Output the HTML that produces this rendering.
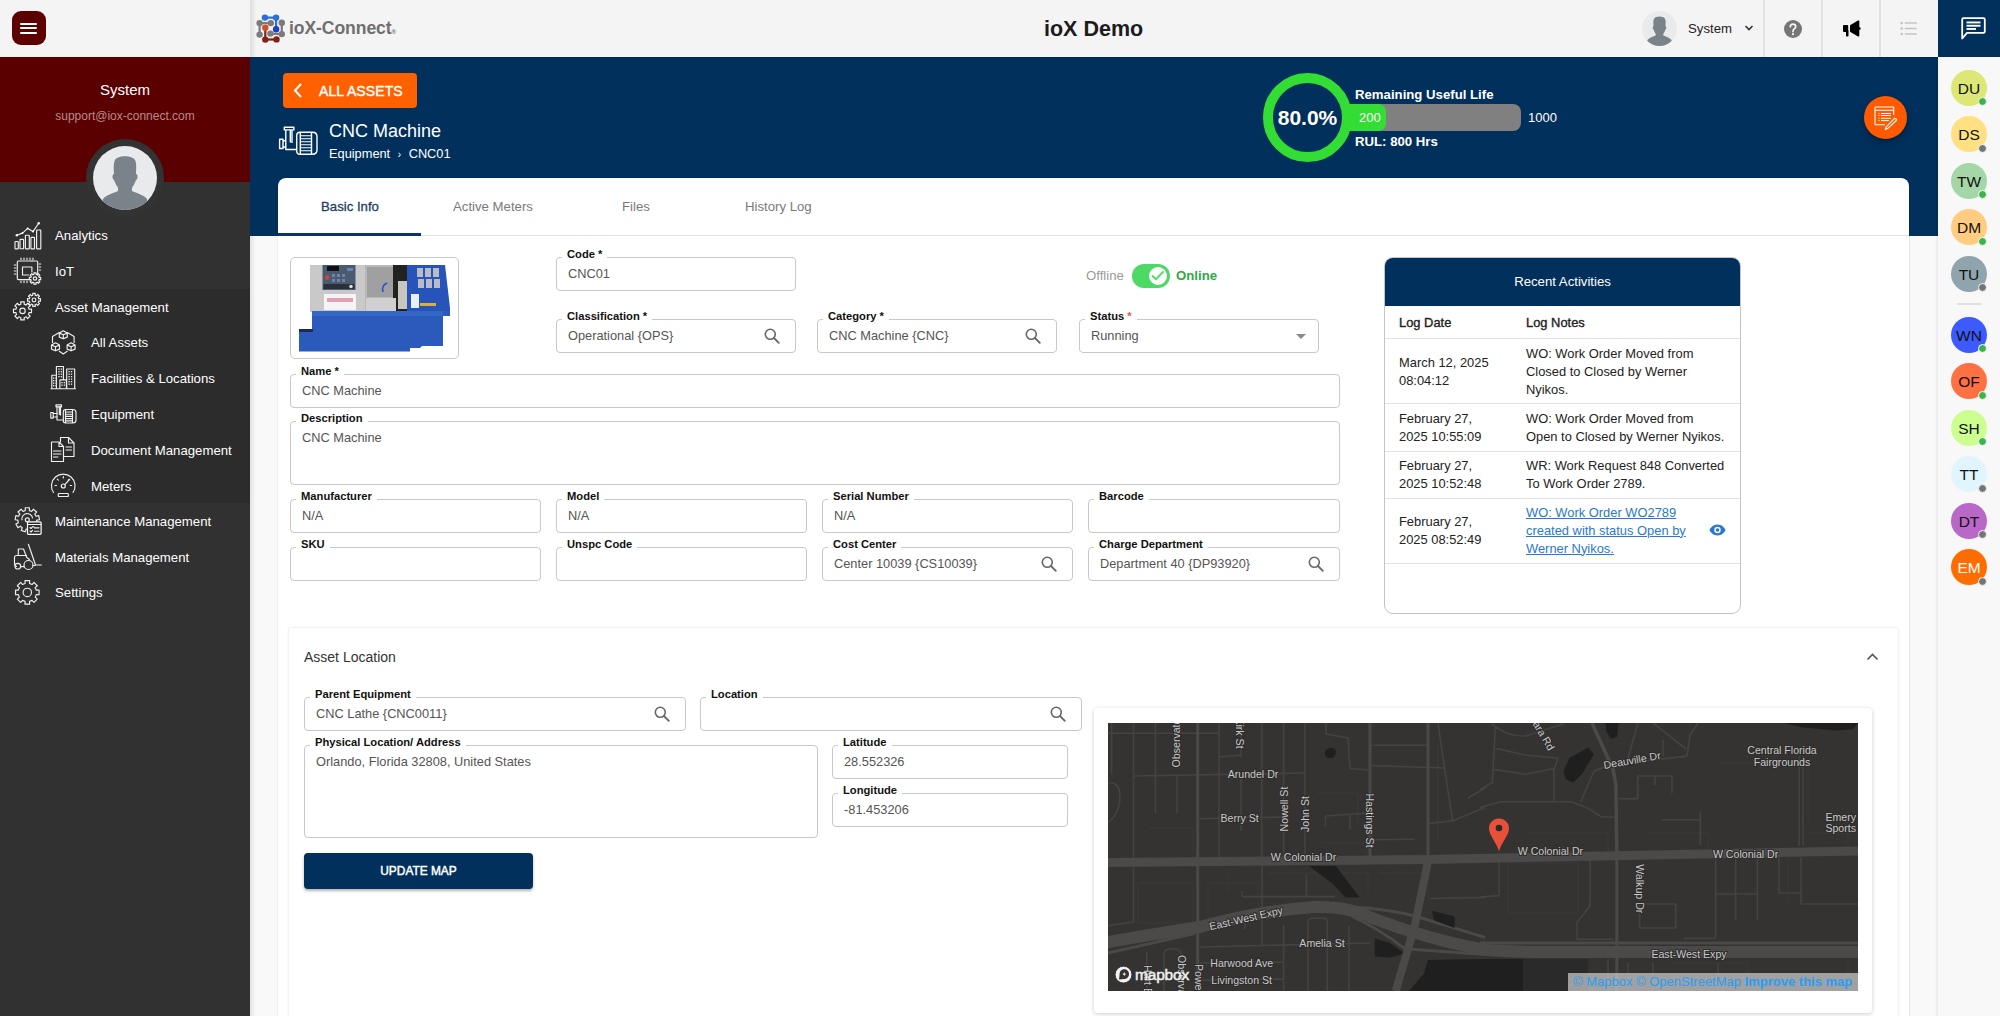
<!DOCTYPE html>
<html><head><meta charset="utf-8">
<style>
*{box-sizing:border-box;margin:0;padding:0}
html,body{width:2000px;height:1016px;overflow:hidden;background:#f7f7f7;font-family:"Liberation Sans",sans-serif;color:#222}
.a{position:absolute}
#topbar{left:0;top:0;width:2000px;height:57px;background:#f4f4f4}
#sbtop{left:0;top:0;width:250px;height:57px;background:#f4f4f4}
#hamb{left:12px;top:11px;width:34px;height:34px;background:#5c0000;border-radius:9px}
#hamb i{position:absolute;left:8px;width:17px;height:2.2px;background:#fff;border-radius:1px}
#side{left:0;top:57px;width:250px;height:959px;background:#313131}
#sidered{left:0;top:57px;width:250px;height:125px;background:#5a0000}
#sideact{left:0;top:289px;width:250px;height:214px;background:#2c2c2c}
.mi{position:absolute;color:#fff;font-size:13.2px;line-height:16px;white-space:nowrap}
.ic{position:absolute}
.ic svg{display:block}
#banner{left:250px;top:57px;width:1688px;height:179px;background:#01305c}
#card{left:278px;top:178px;width:1631px;height:900px;background:#fff;border-radius:8px 8px 0 0;box-shadow:0 0 2px rgba(0,0,0,0.12)}
.tab{position:absolute;top:199px;font-size:13.2px;color:#7a7a7a;white-space:nowrap;line-height:16px}
.fld{position:absolute;border:1px solid #c8c8c8;border-radius:4px;background:#fff}
.fld .l{position:absolute;top:-10px;left:5px;padding:0 5px;background:#fff;font-weight:bold;font-size:11.2px;line-height:13px;color:#111;white-space:nowrap}
.fld .v{position:absolute;left:11px;top:8px;font-size:12.8px;line-height:15px;color:#555;white-space:nowrap}
.srch{position:absolute;top:8px;right:15px;width:16px;height:16px}
#rp{left:1938px;top:57px;width:62px;height:959px;background:#f8f8f8}
#rptop{left:1938px;top:0;width:62px;height:57px;background:#01305c}
.act{position:absolute;font-size:12.9px;line-height:17.8px;color:#222;white-space:nowrap}
.av{position:absolute;left:1951px;width:36px;height:36px;border-radius:50%;font-size:15.5px;line-height:37px;text-align:center;color:#111}
.av i{position:absolute;left:26.5px;top:27.5px;width:9px;height:9px;border-radius:50%;border:1px solid #f8f8f8}
</style></head><body>
<div id="topbar" class="a"></div>
<div id="sbtop" class="a"></div>
<div id="hamb" class="a"><i style="top:11.8px"></i><i style="top:16.3px"></i><i style="top:20.8px"></i></div>
<div class="a" style="left:250px;top:0;width:6px;height:57px;background:linear-gradient(90deg,#ddd,#f4f4f4)"></div>

<!-- Sidebar -->
<div id="side" class="a"></div>
<div id="sidered" class="a"></div>
<div id="sideact" class="a"></div>
<div class="a" style="left:0;top:81px;width:250px;text-align:center;color:#fff;font-size:15px;line-height:18px">System</div>
<div class="a" style="left:0;top:109px;width:250px;text-align:center;color:#b78b8b;font-size:12px;line-height:14px">support@iox-connect.com</div>
<div class="a" style="left:86px;top:139px;width:78px;height:78px;border-radius:50%;background:#333"></div>
<div class="a" style="left:93px;top:146px;width:64px;height:64px;border-radius:50%;background:#e9eaec;overflow:hidden">
<svg width="64" height="64" viewBox="0 0 64 64"><path d="M22 14c3-5 17-5 20 0 2 4 1 10 1 14 2 0 2 5 0 6-1 3-3 6-4 8v3c4 2 12 4 15 8l2 11H8l2-11c3-4 11-6 15-8v-3c-1-2-3-5-4-8-2-1-2-6 0-6 0-4-1-10 1-14z" fill="#7a828a"/></svg></div>

<div class="mi" style="left:55px;top:228px">Analytics</div>
<div class="mi" style="left:55px;top:264px">IoT</div>
<div class="mi" style="left:55px;top:300px">Asset Management</div>
<div class="mi" style="left:91px;top:335px">All Assets</div>
<div class="mi" style="left:91px;top:371px">Facilities &amp; Locations</div>
<div class="mi" style="left:91px;top:407px">Equipment</div>
<div class="mi" style="left:91px;top:443px">Document Management</div>
<div class="mi" style="left:91px;top:479px">Meters</div>
<div class="mi" style="left:55px;top:514px">Maintenance Management</div>
<div class="mi" style="left:55px;top:550px">Materials Management</div>
<div class="mi" style="left:55px;top:585px">Settings</div>
<!--ICONS--><svg class="a" style="left:0;top:200px" width="250" height="420" viewBox="0 200 250 420"><g stroke="#f0f0f0" stroke-width="1.15" fill="none" stroke-linejoin="round" stroke-linecap="round">
<rect x="15" y="241.5" width="3.3000000000000007" height="7.300000000000011" rx="0.6"/>
<rect x="20" y="239.4" width="3.6000000000000014" height="9.400000000000006" rx="0.6"/>
<rect x="25.4" y="235.2" width="3.900000000000002" height="13.600000000000023" rx="0.6"/>
<rect x="30.9" y="237.3" width="3.6000000000000014" height="11.5" rx="0.6"/>
<rect x="36.6" y="230" width="4.199999999999996" height="18.80000000000001" rx="0.6"/>
<path d="M16.8 235.2 L22.5 233.1 L27.7 228.4 L33 231.6 L38.7 223.2"/>
</g><g fill="#fff"><circle cx="16.8" cy="235.2" r="1.2"/><circle cx="22.5" cy="233.1" r="1"/><circle cx="27.7" cy="228.4" r="1"/><circle cx="33" cy="231.6" r="1"/><circle cx="38.7" cy="223.2" r="1.2"/></g>
<g stroke="#f0f0f0" stroke-width="1.15" fill="none" stroke-linejoin="round" stroke-linecap="round">
<path d="M32 261 H18.5 Q17.3 261 17.3 262.2 V278.4 Q17.3 279.6 18.5 279.6 H30.5"/>
<path d="M37.7 275 V262.2 Q37.7 261 36.5 261 H32"/>
<path d="M31.9 272 V267 H22.5 V275 H28.5"/>
<path d="M21 258 V259.6"/><path d="M21 281 V282.6"/>
<path d="M24 258 V259.6"/><path d="M24 281 V282.6"/>
<path d="M27 258 V259.6"/><path d="M27 281 V282.6"/>
<path d="M30 258 V259.6"/>
<path d="M33 258 V259.6"/>
<path d="M14.3 265 H15.8"/>
<path d="M14.3 268 H15.8"/>
<path d="M14.3 271 H15.8"/>
<path d="M14.3 274 H15.8"/>
<path d="M39.2 264 H40.7"/>
<path d="M39.2 267 H40.7"/>
<path d="M39.2 270 H40.7"/>
<path d="M33.35 274.53 L33.96 274.33 L33.87 272.81 L36.13 272.81 L36.04 274.33 L36.65 274.53 L37.22 274.82 L38.22 273.68 L39.82 275.28 L38.68 276.28 L38.97 276.85 L39.17 277.46 L40.69 277.37 L40.69 279.63 L39.17 279.54 L38.97 280.15 L38.68 280.72 L39.82 281.72 L38.22 283.32 L37.22 282.18 L36.65 282.47 L36.04 282.67 L36.13 284.19 L33.87 284.19 L33.96 282.67 L33.35 282.47 L32.78 282.18 L31.78 283.32 L30.18 281.72 L31.32 280.72 L31.03 280.15 L30.83 279.54 L29.31 279.63 L29.31 277.37 L30.83 277.46 L31.03 276.85 L31.32 276.28 L30.18 275.28 L31.78 273.68 L32.78 274.82 Z"/><circle cx="35" cy="278.5" r="1.7"/>
</g>
<g stroke="#f0f0f0" stroke-width="1.15" fill="none" stroke-linejoin="round" stroke-linecap="round"><path d="M19.90 304.62 L20.86 304.30 L20.71 301.88 L24.29 301.88 L24.14 304.30 L25.10 304.62 L26.01 305.07 L27.61 303.25 L30.15 305.79 L28.33 307.39 L28.78 308.30 L29.10 309.26 L31.52 309.11 L31.52 312.69 L29.10 312.54 L28.78 313.50 L28.33 314.41 L30.15 316.01 L27.61 318.55 L26.01 316.73 L25.10 317.18 L24.14 317.50 L24.29 319.92 L20.71 319.92 L20.86 317.50 L19.90 317.18 L18.99 316.73 L17.39 318.55 L14.85 316.01 L16.67 314.41 L16.22 313.50 L15.90 312.54 L13.48 312.69 L13.48 309.11 L15.90 309.26 L16.22 308.30 L16.67 307.39 L14.85 305.79 L17.39 303.25 L18.99 305.07 Z"/><circle cx="22.5" cy="310.9" r="2.7"/>
<path d="M32.16 295.47 L32.84 295.24 L32.71 293.43 L35.29 293.43 L35.16 295.24 L35.84 295.47 L36.48 295.79 L37.67 294.41 L39.49 296.23 L38.11 297.42 L38.43 298.06 L38.66 298.74 L40.47 298.61 L40.47 301.19 L38.66 301.06 L38.43 301.74 L38.11 302.38 L39.49 303.57 L37.67 305.39 L36.48 304.01 L35.84 304.33 L35.16 304.56 L35.29 306.37 L32.71 306.37 L32.84 304.56 L32.16 304.33 L31.52 304.01 L30.33 305.39 L28.51 303.57 L29.89 302.38 L29.57 301.74 L29.34 301.06 L27.53 301.19 L27.53 298.61 L29.34 298.74 L29.57 298.06 L29.89 297.42 L28.51 296.23 L30.33 294.41 L31.52 295.79 Z"/><circle cx="34" cy="299.9" r="1.9"/></g>
<g stroke="#f0f0f0" stroke-width="1.15" fill="none" stroke-linejoin="round" stroke-linecap="round"><path d="M63.3 330.8 L67.3 333.12 V337.12 L63.3 338.8 L59.3 337.12 V333.12 Z M59.3 333.12 L63.3 334.8 L67.3 333.12 M63.3 334.8 V338.8"/><path d="M55.5 342.8 L59.5 345.12 V349.12 L55.5 350.8 L51.5 349.12 V345.12 Z M51.5 345.12 L55.5 346.8 L59.5 345.12 M55.5 346.8 V350.8"/><path d="M71.1 342.8 L75.1 345.12 V349.12 L71.1 350.8 L67.1 349.12 V345.12 Z M67.1 345.12 L71.1 346.8 L75.1 345.12 M71.1 346.8 V350.8"/>
<path d="M59.2 332.5 L52.5 336.5 V342.5 M67.4 332.5 L74.1 336.5 V342.5 M59.3 351.3 L63.3 354 L67.2 351.3"/></g>
<g stroke="#f0f0f0" stroke-width="1.15" fill="none" stroke-linejoin="round" stroke-linecap="round" stroke-width="1.1"><path d="M51 388.7 H75.5 M51.8 388.7 V375.2 H56.4 M56.4 388.7 V366.5 H63.4 V379.8 M59.9 388.7 V379.8 H66.4 V388.7 M66.7 388.7 V369 H74.7 V388.7"/>
</g><g fill="#eee">
<rect x="53.0" y="377.5" width="1.3" height="1.3"/>
<rect x="53.0" y="380.0" width="1.3" height="1.3"/>
<rect x="53.0" y="382.5" width="1.3" height="1.3"/>
<rect x="53.0" y="385.0" width="1.3" height="1.3"/>
<rect x="55.4" y="377.5" width="1.3" height="1.3"/>
<rect x="55.4" y="380.0" width="1.3" height="1.3"/>
<rect x="55.4" y="382.5" width="1.3" height="1.3"/>
<rect x="55.4" y="385.0" width="1.3" height="1.3"/>
<rect x="58.3" y="368.5" width="1.3" height="1.3"/>
<rect x="58.3" y="371.0" width="1.3" height="1.3"/>
<rect x="58.3" y="373.5" width="1.3" height="1.3"/>
<rect x="58.3" y="376.0" width="1.3" height="1.3"/>
<rect x="60.7" y="368.5" width="1.3" height="1.3"/>
<rect x="60.7" y="371.0" width="1.3" height="1.3"/>
<rect x="60.7" y="373.5" width="1.3" height="1.3"/>
<rect x="60.7" y="376.0" width="1.3" height="1.3"/>
<rect x="61.3" y="382.0" width="1.3" height="1.3"/>
<rect x="61.3" y="384.5" width="1.3" height="1.3"/>
<rect x="63.7" y="382.0" width="1.3" height="1.3"/>
<rect x="63.7" y="384.5" width="1.3" height="1.3"/>
<rect x="68.5" y="371.0" width="1.3" height="1.3"/>
<rect x="68.5" y="373.5" width="1.3" height="1.3"/>
<rect x="68.5" y="376.0" width="1.3" height="1.3"/>
<rect x="68.5" y="378.5" width="1.3" height="1.3"/>
<rect x="68.5" y="381.0" width="1.3" height="1.3"/>
<rect x="68.5" y="383.5" width="1.3" height="1.3"/>
<rect x="70.9" y="371.0" width="1.3" height="1.3"/>
<rect x="70.9" y="373.5" width="1.3" height="1.3"/>
<rect x="70.9" y="376.0" width="1.3" height="1.3"/>
<rect x="70.9" y="378.5" width="1.3" height="1.3"/>
<rect x="70.9" y="381.0" width="1.3" height="1.3"/>
<rect x="70.9" y="383.5" width="1.3" height="1.3"/>
</g>
<g stroke="#f0f0f0" stroke-width="1.15" fill="none" stroke-linejoin="round" stroke-linecap="round" stroke-width="1.1"><rect x="56" y="404.8" width="5.5" height="2"/><path d="M57 406.8 V420 H63.5 M60.5 406.8 V415 M59.3 406.8 V414.5"/><rect x="50.8" y="412.5" width="2.4" height="5.6"/><path d="M53.2 413.5 H57 M53.2 417 H57"/><path d="M65.5 409.5 H73 Q76 409.5 76 412.5 V420 Q76 423 73 423 H65.5 Q63.3 423 63.3 420.8 V411.7 Q63.3 409.5 65.5 409.5 Z M65.5 409.5 V423 M72.5 409.5 V423 M65.5 412 H72.5 M65.5 414.2 H72.5 M65.5 416.4 H72.5 M65.5 418.6 H72.5 M65.5 420.8 H72.5"/></g>
<g stroke="#f0f0f0" stroke-width="1.15" fill="none" stroke-linejoin="round" stroke-linecap="round" stroke-width="1.2"><path d="M51.5 442 H59 L63.5 446.5 V461.5 H51.5 Z M59 442 V446.5 H63.5"/><path d="M60.5 437.5 H68.5 L74 443 V456.5 H64.5 M60.5 437.5 V442 M68.5 437.5 V443 H74"/><path d="M53.5 451 H61 M53.5 454 H61 M53.5 457 H58 M66 447 H71.5 M66 450 H71.5"/></g>
<g stroke="#f0f0f0" stroke-width="1.15" fill="none" stroke-linejoin="round" stroke-linecap="round" stroke-width="1.2"><path d="M53.5 492.5 A11.8 11.8 0 1 1 73 492.5"/><rect x="58.3" y="493.5" width="10" height="3" rx="0.6"/><circle cx="63.3" cy="486" r="2"/><path d="M64.8 484.6 L69.5 479.5 M63.3 476.5 V478 M55 485.5 H56.5 M70.2 485.5 H71.6 M57.3 479.2 L58.3 480.2 M69.3 479.2 L68.3 480.2"/></g>
<g stroke="#f0f0f0" stroke-width="1.15" fill="none" stroke-linejoin="round" stroke-linecap="round"><path d="M24.09 510.97 L25.28 510.62 L25.18 507.79 L29.42 507.79 L29.32 510.62 L30.51 510.97 L31.65 511.47 L33.40 509.23 L36.65 511.96 L34.75 514.06 L35.44 515.10 L35.99 516.22 L38.76 515.63 L39.50 519.80 L36.69 520.19 L36.56 521.43 L36.26 522.64 L38.76 523.97 L36.65 527.64 L34.24 526.14 L33.34 527.00 L32.34 527.74 L33.40 530.37 L29.42 531.81 L28.54 529.12 L27.30 529.20 L26.06 529.12 L25.18 531.81 L21.20 530.37 L22.26 527.74 L21.26 527.00 L20.36 526.14 L17.95 527.64 L15.84 523.97 L18.34 522.64 L18.04 521.43 L17.91 520.19 L15.10 519.80 L15.84 515.63 L18.61 516.22 L19.16 515.10 L19.85 514.06 L17.95 511.96 L21.20 509.23 L22.95 511.47 Z"/></g>
<rect x="27.5" y="521.8" width="13.6" height="12.5" rx="1" fill="#2e2e2e" stroke="#fff" stroke-width="1.2"/>
<g stroke="#f0f0f0" stroke-width="1.15" fill="none" stroke-linejoin="round" stroke-linecap="round" stroke-width="1"><path d="M27.5 524.5 H41 M30 527.5 L31 528.5 L32.5 526.8 H34 M34.5 527.8 H39 M30 531 L31 532 L32.5 530.3 M34.5 531.2 H39"/><circle cx="27.3" cy="519.8" r="2" /><path d="M22 519.8 A5.3 5.3 0 0 1 32.5 518" stroke-dasharray="1 1"/></g>
<g stroke="#f0f0f0" stroke-width="1.15" fill="none" stroke-linejoin="round" stroke-linecap="round" stroke-width="1.2"><path d="M16.5 566.5 Q14.5 566 14.5 563.5 V557.5 Q14.5 555.5 16.5 555.5 H18.3 V549 H23.5 L26.8 557.5 L29.5 559.5"/><path d="M18.3 555.5 H26.5"/><circle cx="17.8" cy="566.2" r="2.8"/><circle cx="28.5" cy="565" r="4.5"/><path d="M28.4 544.3 L35.5 565 H41.4 M33 565.5 H35"/><path d="M20.6 566.6 H24"/></g>
<g stroke="#f0f0f0" stroke-width="1.15" fill="none" stroke-linejoin="round" stroke-linecap="round"><path d="M23.78 583.90 L25.08 583.47 L24.96 580.63 L29.64 580.63 L29.52 583.47 L30.82 583.90 L32.05 584.52 L33.97 582.42 L37.28 585.73 L35.18 587.65 L35.80 588.88 L36.23 590.18 L39.07 590.06 L39.07 594.74 L36.23 594.62 L35.80 595.92 L35.18 597.15 L37.28 599.07 L33.97 602.38 L32.05 600.28 L30.82 600.90 L29.52 601.33 L29.64 604.17 L24.96 604.17 L25.08 601.33 L23.78 600.90 L22.55 600.28 L20.63 602.38 L17.32 599.07 L19.42 597.15 L18.80 595.92 L18.37 594.62 L15.53 594.74 L15.53 590.06 L18.37 590.18 L18.80 588.88 L19.42 587.65 L17.32 585.73 L20.63 582.42 L22.55 584.52 Z"/><circle cx="27.3" cy="592.4" r="4.2"/></g>
</svg><!--/ICONS-->

<!-- Header -->

<svg class="a" style="left:252px;top:10px" width="36" height="36" viewBox="252 10 36 36">
<g stroke-width="2.2" fill="none">
<path d="M264.9 17.6 L276.1 17.6 L276.1 29.3" stroke="#2a6fd6"/>
<path d="M270.8 23.1 L259.6 23.1 L259.6 34.6 M270.4 33.6 L281.8 34.1 L281.8 22.8" stroke="#7b7b7b"/>
<path d="M265.3 27.7 L265.3 39.6 L276.5 39.4" stroke="#7f2418"/>
</g>
<g fill="#7b7b7b"><circle cx="259.6" cy="23.1" r="3.2"/><circle cx="270.8" cy="23.1" r="3.2"/><circle cx="259.6" cy="34.6" r="3.2"/><circle cx="270.4" cy="33.6" r="3.2"/><circle cx="281.8" cy="22.8" r="3.2"/><circle cx="281.8" cy="34.1" r="3.2"/></g>
<g fill="#2a6fd6"><circle cx="264.9" cy="17.6" r="3.2"/><circle cx="276.1" cy="17.6" r="3.2"/></g>
<circle cx="276.1" cy="29.3" r="3.2" fill="#1a3fc8"/>
<circle cx="265.3" cy="27.7" r="3.2" fill="#d4502a"/>
<g fill="#7f2418"><circle cx="265.3" cy="39.6" r="3.2"/><circle cx="276.5" cy="39.4" r="3.2"/></g>
</svg>
<div class="a" style="left:289px;top:17px;font-size:17.6px;font-weight:bold;color:#6f6f6f;line-height:22px;letter-spacing:-0.1px">ioX-Connect<span style="font-size:6px">®</span></div>
<div class="a" style="left:1044px;top:16px;font-size:21.5px;font-weight:bold;color:#1c1c1c;line-height:26px">ioX Demo</div>
<div class="a" style="left:1642px;top:11px;width:35px;height:35px;border-radius:50%;background:#e9eaec;overflow:hidden">
<svg width="35" height="35" viewBox="0 0 64 64"><path d="M22 14c3-5 17-5 20 0 2 4 1 10 1 14 2 0 2 5 0 6-1 3-3 6-4 8v3c4 2 12 4 15 8l2 11H8l2-11c3-4 11-6 15-8v-3c-1-2-3-5-4-8-2-1-2-6 0-6 0-4-1-10 1-14z" fill="#7a828a"/></svg></div>
<div class="a" style="left:1688px;top:21px;font-size:13.2px;color:#222;line-height:16px">System</div>
<svg class="a" style="left:1744px;top:24px" width="10" height="8" viewBox="0 0 10 8"><path d="M1.5 2 L5 5.5 L8.5 2" stroke="#333" stroke-width="1.6" fill="none"/></svg>
<div class="a" style="left:1763px;top:0;width:2px;height:57px;background:#e2e2e2"></div>
<div class="a" style="left:1821px;top:0;width:2px;height:57px;background:#e2e2e2"></div>
<div class="a" style="left:1879px;top:0;width:2px;height:57px;background:#e2e2e2"></div>
<svg class="a" style="left:1784px;top:19.5px" width="18" height="18" viewBox="0 0 18 18"><circle cx="9" cy="9" r="9" fill="#757575"/><path d="M6.3 6.8 Q6.3 4.2 9 4.2 Q11.7 4.2 11.7 6.6 Q11.7 8 10.2 8.9 Q9 9.6 9 11 V11.6" stroke="#f4f4f4" stroke-width="1.7" fill="none" stroke-linecap="round"/><circle cx="9" cy="14.2" r="1.1" fill="#f4f4f4"/></svg>
<svg class="a" style="left:1840px;top:18px" width="22" height="21" viewBox="0 0 22 21"><g fill="#000"><rect x="3" y="7" width="5.2" height="7" rx="1"/><rect x="6" y="12" width="2.5" height="6.5" rx="0.8"/><path d="M10 7.2 L18 2.6 Q19.3 2 19.3 3.4 V17.6 Q19.3 19 18 18.4 L10 13.8 Z"/><circle cx="19.4" cy="10.5" r="1.3"/></g></svg>
<svg class="a" style="left:1900px;top:21px" width="18" height="16" viewBox="0 0 18 16"><g fill="#c2c2c2"><circle cx="1.7" cy="2" r="1.3"/><circle cx="1.7" cy="7.5" r="1.3"/><circle cx="1.7" cy="13" r="1.3"/><rect x="4.8" y="1.3" width="12" height="1.4"/><rect x="4.8" y="6.8" width="12" height="1.4"/><rect x="4.8" y="12.3" width="12" height="1.4"/></g></svg>


<!-- Banner -->
<div id="banner" class="a"></div>
<div class="a" style="left:250px;top:57px;width:1688px;height:3px;background:linear-gradient(180deg,rgba(0,0,0,0.18),rgba(0,0,0,0))"></div>

<div class="a" style="left:283px;top:73px;width:134px;height:35px;background:#ff6000;border-radius:4px"></div>
<svg class="a" style="left:292px;top:82px" width="12" height="17" viewBox="0 0 12 17"><path d="M9 2 L3 8.5 L9 15" stroke="#fff" stroke-width="2" fill="none"/></svg>
<div class="a" style="left:319px;top:82.7px;font-size:14px;-webkit-text-stroke:0.4px #fff;color:#fff;line-height:17px;letter-spacing:0.1px">ALL ASSETS</div>
<svg class="a" style="left:270px;top:120px" width="55" height="40" viewBox="270 120 55 40" fill="none" stroke="#fff" stroke-width="1.4" stroke-linejoin="round">
<rect x="284.3" y="127.3" width="9.6" height="2.6"/>
<path d="M285.8 130 V149.5 H297 M292 130 V143 M290.3 130 V142.5"/>
<rect x="279.6" y="139.2" width="3.4" height="9.3"/>
<path d="M283 140.8 H285.8 M283 147 H285.8"/>
<path d="M300 132.3 H312.5 Q317 132.3 317 136.8 V149.8 Q317 154.3 312.5 154.3 H300 Q296.7 154.3 296.7 151 V135.6 Q296.7 132.3 300 132.3 Z"/>
<path d="M300.3 132.3 V154.3 M311.5 132.3 V154.3"/>
<path d="M300.3 135.8 H311.5 M300.3 138.8 H311.5 M300.3 141.8 H311.5 M300.3 144.8 H311.5 M300.3 147.8 H311.5 M300.3 150.8 H311.5" stroke-width="1.1"/>
</svg>
<div class="a" style="left:329px;top:121px;font-size:18px;color:#fff;line-height:21px">CNC Machine</div>
<div class="a" style="left:329px;top:146px;font-size:12.8px;color:#fff;line-height:16px">Equipment <span style="font-size:10px;margin:0 4px">›</span> CNC01</div>

<div class="a" style="left:1355px;top:104px;width:166px;height:27px;border-radius:8px;background:#808080"></div>
<div class="a" style="left:1340px;top:104px;width:46px;height:27px;border-radius:0 8px 8px 0;background:#33dd33"></div>
<div class="a" style="left:1263px;top:73px;width:89px;height:89px;border-radius:50%;border:10px solid #33dd33;background:#01305c"></div>
<div class="a" style="left:1263px;top:106px;width:89px;text-align:center;font-size:21px;font-weight:bold;color:#fff;line-height:24px">80.0%</div>
<div class="a" style="left:1359px;top:110px;font-size:13px;color:#fff;line-height:15px">200</div>
<div class="a" style="left:1528px;top:110px;font-size:13px;color:#fff;line-height:15px">1000</div>
<div class="a" style="left:1355px;top:86.5px;font-size:13.2px;font-weight:bold;color:#fff;line-height:16px">Remaining Useful Life</div>
<div class="a" style="left:1355px;top:134px;font-size:13.2px;font-weight:bold;color:#fff;line-height:16px">RUL: 800 Hrs</div>

<div class="a" style="left:1864px;top:96px;width:43px;height:43px;border-radius:50%;background:#ff5a00;box-shadow:0 3px 6px rgba(0,0,0,0.35)"></div>
<svg class="a" style="left:1870px;top:102px" width="32" height="32" viewBox="1870 102 32 32" fill="none" stroke="#fff" stroke-width="1.1">
<path d="M1893.7 115 V107.5 Q1893.7 107 1893.2 107 H1875.5 Q1875 107 1875 107.5 V124.2 Q1875 124.7 1875.5 124.7 H1885"/>
<path d="M1875 110.3 H1893.7"/>
<path d="M1881 113.5 H1891 M1881 115.5 H1891 M1881 118.3 H1891 M1881 120.6 H1889" stroke-width="1"/>
<path d="M1878.5 113.5 H1879.5 M1878.5 115.5 H1879.5 M1878.5 118.3 H1879.5 M1878.5 120.6 H1879.5" stroke-width="1"/>
<path d="M1894.8 118.2 Q1896.8 118.8 1896.2 120.6 L1887.6 128.6 L1885.5 129.4 L1886 127.2 Z" fill="#ff5a00" stroke-width="1.2"/>
</svg>


<!-- Card -->
<div class="a" style="left:250px;top:236px;width:1688px;height:780px;background:#f9f9f9"></div>
<div class="a" style="left:250px;top:236px;width:6px;height:780px;background:linear-gradient(90deg,rgba(0,0,0,0.09),rgba(0,0,0,0))"></div>
<div id="card" class="a"></div>
<div class="a" style="left:1909px;top:236px;width:1px;height:780px;background:#e6e6e6"></div>
<div class="tab" style="left:321px;color:#1d3f66;-webkit-text-stroke:0.3px #1d3f66">Basic Info</div>
<div class="tab" style="left:453px">Active Meters</div>
<div class="tab" style="left:622px">Files</div>
<div class="tab" style="left:745px">History Log</div>
<div class="a" style="left:278px;top:235px;width:1631px;height:1px;background:#e3e3e3"></div>
<div class="a" style="left:278px;top:233px;width:143px;height:3px;background:#0d3563"></div>
<div class="a" style="left:290px;top:257px;width:169px;height:102px;border:1px solid #c8c8c8;border-radius:5px;background:#fff"></div>
<svg class="a" style="left:295px;top:260px" width="160" height="96" viewBox="0 0 160 96">
<rect x="15" y="5" width="56" height="47" fill="#c9c9c9"/>
<rect x="27.5" y="5" width="33" height="25" fill="#4a5a70"/>
<rect x="32" y="6" width="12" height="5" fill="#111"/>
<circle cx="32" cy="17.5" r="2.2" fill="#e0402a"/>
<rect x="28.5" y="24" width="31" height="5" fill="#2a2f38"/>
<rect x="29" y="34" width="32" height="16" fill="#f4f4f6"/>
<rect x="32" y="38" width="26" height="4" fill="#e3a0b0"/>
<rect x="70" y="5" width="44" height="47" fill="#b8b8b8"/>
<rect x="72" y="7" width="28" height="30" fill="#a0a0a0"/>
<rect x="98" y="5" width="16" height="47" fill="#222"/>
<rect x="103" y="21" width="9" height="28" fill="#c8c8c0"/>
<path d="M92 23 Q86 26 88 32" stroke="#2a50d0" stroke-width="1.6" fill="none"/>
<rect x="71" y="38" width="30" height="14" fill="#d0d0d0"/><g fill="#6d86a8"><rect x="37" y="14" width="3" height="3"/><rect x="42" y="14" width="3" height="3"/><rect x="47" y="14" width="3" height="3"/><rect x="37" y="19" width="3" height="3"/><rect x="42" y="19" width="3" height="3"/><rect x="47" y="19" width="3" height="3"/><rect x="52" y="8" width="6" height="3"/></g><circle cx="56" cy="26.5" r="1.8" fill="#ddd"/>
<path d="M112 5 H150 L155 48 V56 H112 Z" fill="#2754b8"/>
<g fill="#b9bcc6"><rect x="122" y="8" width="6" height="9"/><rect x="130" y="8" width="6" height="9"/><rect x="138" y="8" width="6" height="9"/><rect x="123" y="19" width="6" height="9"/><rect x="131" y="19" width="6" height="9"/><rect x="139" y="19" width="6" height="9"/></g>
<rect x="116" y="34" width="8" height="14" fill="#e8eef4"/>
<rect x="125" y="43" width="16" height="3" fill="#d8b040"/>
<path d="M17 51 H155 V56 H148 V86 H127 L125 88 H115 V91.5 H4 V69 H17 Z" fill="#2a5abb"/>
<rect x="4" y="69" width="14" height="3" fill="#1a2a50"/>
<rect x="17" y="51" width="131" height="5" fill="#3568c4"/>
</svg>
<div class="fld" style="left:556px;top:257px;width:240px;height:34px"><span class="l">Code *</span><span class="v">CNC01</span></div>
<div class="a" style="left:1086px;top:268px;font-size:13.2px;color:#9a9a9a;line-height:16px">Offline</div>
<div class="a" style="left:1132px;top:264px;width:37.5px;height:23.5px;border-radius:12px;background:#4cd964"></div>
<div class="a" style="left:1148.5px;top:266.5px;width:18.5px;height:18.5px;border-radius:50%;background:#fff"></div>
<svg class="a" style="left:1149px;top:267px" width="17" height="17" viewBox="0 0 17 17"><path d="M3.5 9 L7 12.2 L14 4.8" stroke="#4cd964" stroke-width="1.8" fill="none" stroke-linecap="round"/></svg>
<div class="a" style="left:1176px;top:268px;font-size:13.2px;font-weight:bold;color:#30a946;line-height:16px">Online</div>
<div class="fld" style="left:556px;top:319px;width:240px;height:34px"><span class="l">Classification *</span><span class="v">Operational {OPS}</span><svg class="srch" viewBox="0 0 16 16"><circle cx="6.3" cy="6.3" r="5" stroke="#666" stroke-width="1.6" fill="none"/><path d="M10 10 L14.8 14.8" stroke="#666" stroke-width="1.8" stroke-linecap="round"/></svg></div>
<div class="fld" style="left:817px;top:319px;width:240px;height:34px"><span class="l">Category *</span><span class="v">CNC Machine {CNC}</span><svg class="srch" viewBox="0 0 16 16"><circle cx="6.3" cy="6.3" r="5" stroke="#666" stroke-width="1.6" fill="none"/><path d="M10 10 L14.8 14.8" stroke="#666" stroke-width="1.8" stroke-linecap="round"/></svg></div>
<div class="fld" style="left:1079px;top:319px;width:240px;height:34px"><span class="l">Status <span style="color:#e53">*</span></span><span class="v">Running</span><svg class="a" style="right:12px;top:14px" width="10" height="5" viewBox="0 0 10 5"><path d="M0 0 H10 L5 5 Z" fill="#8a8a8a"/></svg></div>
<div class="fld" style="left:290px;top:374px;width:1050px;height:34px"><span class="l">Name *</span><span class="v">CNC Machine</span></div>
<div class="fld" style="left:290px;top:421px;width:1050px;height:64px"><span class="l">Description</span><span class="v">CNC Machine</span></div>
<div class="fld" style="left:290px;top:499px;width:251px;height:34px"><span class="l">Manufacturer</span><span class="v">N/A</span></div>
<div class="fld" style="left:556px;top:499px;width:251px;height:34px"><span class="l">Model</span><span class="v">N/A</span></div>
<div class="fld" style="left:822px;top:499px;width:251px;height:34px"><span class="l">Serial Number</span><span class="v">N/A</span></div>
<div class="fld" style="left:1088px;top:499px;width:252px;height:34px"><span class="l">Barcode</span></div>
<div class="fld" style="left:290px;top:547px;width:251px;height:34px"><span class="l">SKU</span></div>
<div class="fld" style="left:556px;top:547px;width:251px;height:34px"><span class="l">Unspc Code</span></div>
<div class="fld" style="left:822px;top:547px;width:251px;height:34px"><span class="l">Cost Center</span><span class="v">Center 10039 {CS10039}</span><svg class="srch" viewBox="0 0 16 16"><circle cx="6.3" cy="6.3" r="5" stroke="#666" stroke-width="1.6" fill="none"/><path d="M10 10 L14.8 14.8" stroke="#666" stroke-width="1.8" stroke-linecap="round"/></svg></div>
<div class="fld" style="left:1088px;top:547px;width:252px;height:34px"><span class="l">Charge Department</span><span class="v">Department 40 {DP93920}</span><svg class="srch" viewBox="0 0 16 16"><circle cx="6.3" cy="6.3" r="5" stroke="#666" stroke-width="1.6" fill="none"/><path d="M10 10 L14.8 14.8" stroke="#666" stroke-width="1.8" stroke-linecap="round"/></svg></div>
<div class="a" style="left:1384px;top:257px;width:357px;height:357px;border:1px solid #c4c4c4;border-radius:9px;background:#fff;overflow:hidden">
<div class="a" style="left:0;top:0;width:355px;height:48px;background:#01305c;color:#fff;font-size:13.2px;line-height:48px;text-align:center">Recent Activities</div>
<div class="a" style="left:0;top:80px;width:355px;height:1px;background:#e2e2e2"></div>
<div class="a" style="left:0;top:145px;width:355px;height:1px;background:#e2e2e2"></div>
<div class="a" style="left:0;top:193px;width:355px;height:1px;background:#e2e2e2"></div>
<div class="a" style="left:0;top:240px;width:355px;height:1px;background:#e2e2e2"></div>
<div class="a" style="left:0;top:305px;width:355px;height:1px;background:#e2e2e2"></div>
</div>
<div class="act" style="left:1399px;top:314px;-webkit-text-stroke:0.35px #222;color:#222">Log Date</div>
<div class="act" style="left:1526px;top:314px;-webkit-text-stroke:0.35px #222;color:#222">Log Notes</div>
<div class="act" style="left:1399px;top:354px">March 12, 2025<br>08:04:12</div>
<div class="act" style="left:1526px;top:345px">WO: Work Order Moved from<br>Closed to Closed by Werner<br>Nyikos.</div>
<div class="act" style="left:1399px;top:410px">February 27,<br>2025 10:55:09</div>
<div class="act" style="left:1526px;top:410px">WO: Work Order Moved from<br>Open to Closed by Werner Nyikos.</div>
<div class="act" style="left:1399px;top:457px">February 27,<br>2025 10:52:48</div>
<div class="act" style="left:1526px;top:457px">WR: Work Request 848 Converted<br>To Work Order 2789.</div>
<div class="act" style="left:1399px;top:513px">February 27,<br>2025 08:52:49</div>
<div class="act" style="left:1526px;top:504px;color:#2a78d0;text-decoration:underline">WO: Work Order WO2789<br>created with status Open by<br>Werner Nyikos.</div>
<svg class="a" style="left:1709px;top:524px" width="17" height="12" viewBox="0 0 17 12"><path d="M8.5 0.5 C4.5 0.5 1.5 3.5 0.5 6 C1.5 8.5 4.5 11.5 8.5 11.5 C12.5 11.5 15.5 8.5 16.5 6 C15.5 3.5 12.5 0.5 8.5 0.5 Z" fill="#2a78d0"/><circle cx="8.5" cy="6" r="3.2" fill="#fff"/><circle cx="8.5" cy="6" r="1.8" fill="#2a78d0"/></svg>

<div class="a" style="left:289px;top:628px;width:1609px;height:400px;background:#fff;box-shadow:0 0 3px rgba(0,0,0,0.14);border-radius:2px"></div>
<div class="a" style="left:304px;top:649px;font-size:14px;color:#333;line-height:16px">Asset Location</div>
<svg class="a" style="left:1866px;top:652px" width="13" height="9" viewBox="0 0 13 9"><path d="M1.5 7.5 L6.5 2.5 L11.5 7.5" stroke="#555" stroke-width="1.6" fill="none"/></svg>
<div class="fld" style="left:304px;top:697px;width:382px;height:34px"><span class="l">Parent Equipment</span><span class="v">CNC Lathe {CNC0011}</span><svg class="srch" viewBox="0 0 16 16"><circle cx="6.3" cy="6.3" r="5" stroke="#666" stroke-width="1.6" fill="none"/><path d="M10 10 L14.8 14.8" stroke="#666" stroke-width="1.8" stroke-linecap="round"/></svg></div>
<div class="fld" style="left:700px;top:697px;width:382px;height:34px"><span class="l">Location</span><svg class="srch" viewBox="0 0 16 16"><circle cx="6.3" cy="6.3" r="5" stroke="#666" stroke-width="1.6" fill="none"/><path d="M10 10 L14.8 14.8" stroke="#666" stroke-width="1.8" stroke-linecap="round"/></svg></div>
<div class="fld" style="left:304px;top:745px;width:514px;height:93px"><span class="l">Physical Location/ Address</span><span class="v">Orlando, Florida 32808, United States</span></div>
<div class="fld" style="left:832px;top:745px;width:236px;height:34px"><span class="l">Latitude</span><span class="v">28.552326</span></div>
<div class="fld" style="left:832px;top:793px;width:236px;height:34px"><span class="l">Longitude</span><span class="v">-81.453206</span></div>
<div class="a" style="left:304px;top:853px;width:229px;height:36px;border-radius:4px;box-shadow:0 2px 3px rgba(0,0,0,0.3);background:#01305c;color:#fff;font-size:11.9px;-webkit-text-stroke:0.45px #fff;line-height:36px;text-align:center">UPDATE MAP</div>
<div class="a" style="left:1094px;top:708px;width:778px;height:305px;background:#fff;border-radius:4px;box-shadow:0 1px 4px rgba(0,0,0,0.2)"></div>
<svg class="a" style="left:1108px;top:723px" width="750" height="268" viewBox="0 0 750 268">
<rect width="750" height="268" fill="#343332"/>
<!-- faint parcel lines -->
<g stroke="#3a3938" stroke-width="1" fill="none">
<path d="M30 160 H85 V200 H30 Z M100 160 H150 V195 H100 Z M40 105 H85 V130 M120 150 V170 M160 150 H260 V170 M270 150 H320 V175 M420 110 H500 V128 M540 110 H600 V128 M610 130 H680 V180 M700 110 H740 V128 M660 230 H740 V250 M560 240 H640 V260 M400 140 H470 V190 H400 Z M210 70 H250 V100 M215 120 H258 V140 M610 40 H700 V100 M330 20 V120"/>
</g>
<!-- minor streets -->
<g stroke="#444342" stroke-width="1.6" fill="none" stroke-linejoin="round">
<path d="M25.5 0 V136 M47.4 0 V53 M111 0 V137 M153.7 0 V136 M175.6 0 V136 M196.9 0 V136 M3.6 0 V52"/>
<path d="M0 10.3 H111 M25.5 53 L197 50 M89.7 95.8 L175.6 94 M264 22.3 H320 M264 42.6 L337 45 M217.4 93 L261 90 M217.4 93 V104 M242 91 V106 M264 116.7 L306.7 116.3"/>
<path d="M0 60 Q12 58 12 75 Q12 90 0 100 M47.4 53 V90 M69 53 V90 M133 34 V0 M111 34 L133 32 M133 55 V108"/>
<path d="M218 0 V11 L240 15 L242 45.5 L262 47"/>
<path d="M320 100.6 L344.7 97.7 L377 84.4 M330 0 Q337 50 344.7 97.7 M377 65 L360 75"/>
<path d="M383.4 0.8 Q400 14 417.6 13 L455.6 0.8 M387.2 4.6 L384.3 59.7 L372 66.4 M372 84.4 L392.9 78.7 H463.2 L478.4 84.4 L493.6 94 H507 M446 46.4 V78.7 M385.3 24.6 L417.6 32.2 L449.9 35 M385.3 46.4 L417.6 51.2 L446 45.5 M472.7 78.7 L486 48.3 L501.2 41.7 L579 33.1 M449.9 35 L446 46.4"/>
<path d="M529.7 53 H563.9 V70.2 M529.7 53 V75.8 H510.7 M547 53 V62 M554.4 96.7 H592.4 M592.4 88.2 V122.4 M691.2 33.1 V122.4 M695 33.1 V122.4 M579 33.1 L582 12 L590 0 M545 0 L578 26 M555 17 V33 M530 0 L520 35"/>
<path d="M25.5 143 V199 M154 143 V222 M198.4 151 V173.6 M175.6 202 V268 M241 203 V268 M200 268 V200 Q200 195 205 195 H215 Q219.3 195 219.3 200 V268 M134 173.6 H227 M134 168 V173.6 M92 224 L262 220 M92 240 L175.6 239 M92 257 L175.6 256 M322 175.5 L377 174.5 M56 268 V232 Q56 226 62 226 H68 Q73 226 73 232 V268 M38.8 229 V268 M-3 203 L25.5 199 M137 200 V206"/>
<path d="M391 136.5 V172.6 L372 174 M482.2 134.6 L482 183 L469 199.2 V216.3 H505 M531.6 181 H567.7 V205 H531.6 Z M607.6 134.6 V215.4 H576 M627.6 134.6 V197.3 M649.4 134.6 V197.3 M607.6 171 H649.4 M693 134.6 V181 H750 M671 134.6 V170 H693 M372 220 H750 M400 236 V268 M430 240 V268 M470 245 V268 M500 236 V268 M520 240 V268 M545 240 V268 M610 240 V268"/>
</g>
<!-- medium roads -->
<g stroke="#4a4948" stroke-width="3" fill="none">
<path d="M89.7 0 V268 M262 0 V136 M320 0 V136 M508.8 134 V268"/>
<path d="M-3 230.6 L86.3 210.6 M244 184 Q280 186 308.6 193.5 L377 214.4 M244 193.5 Q270 205 297 225.8 L377 231.5 M372 220 H750"/>
</g>
<!-- water -->
<g fill="#1f1f1f">
<path d="M218 27 Q224 22 228 28 Q228 36 220 35 Q215 32 218 27 Z"/>
<path d="M455.6 48.3 L461.3 35 L480.3 24.6 L486 31.2 L474.6 50.2 L465.1 59.7 L457.5 56 Z"/>
<path d="M497.4 0 L510.7 0 L508.8 14.1 L503.1 16 L498.4 8.4 Z"/>
<path d="M676 0 L750 0 L745 6 L729 7.5 L695 4.6 Z"/>
<path d="M201 143 L228 143 L251.6 174.5 L237.4 174.5 L225 161 Z"/>
<path d="M266.8 215.4 L282 220 L296.3 230.6 L282 234.4 L266.8 233.4 Z"/>
<path d="M324 187.8 L346.6 193.5 L346.6 205 L325.7 197.3 Z"/>
<path d="M301 268 L316 250.5 L320 237 L377 236 L415 236 V268 Z"/>
<path d="M415 236 H480 V268 H415 Z" fill="#2a2a2a"/>
</g>
<!-- major roads -->
<g stroke="#4b4a49" fill="none">
<path d="M0 139.4 L320 136.5 L750 128" stroke-width="9"/>
<path d="M-3 219.6 Q40 212 92 204 Q150 188 206 184 Q240 183 263 194.5 Q290 205 320 213.5 Q345 221 377 226.8 Q400 229 450 229 H750" stroke-width="12"/>
<path d="M484 0 L505 46.4 L507.9 61.6 L508.8 134" stroke-width="3.5"/>
<path d="M320 138.4 L306.7 203 L287.7 268" stroke-width="8"/>
</g>
<!-- labels -->
<g font-family="Liberation Sans" font-size="10.6" fill="#c9c9c9" stroke="#2e2d2c" stroke-width="2" paint-order="stroke" text-anchor="middle" dominant-baseline="central">
<text x="195.5" y="133.5">W Colonial Dr</text>
<text x="442.4" y="127.6">W Colonial Dr</text>
<text x="637.6" y="130.5">W Colonial Dr</text>
<text x="145" y="51">Arundel Dr</text>
<text x="131.6" y="95.2">Berry St</text>
<text x="214" y="220.4">Amelia St</text>
<text x="133.7" y="240">Harwood Ave</text>
<text x="133.7" y="257">Livingston St</text>
<text x="581" y="230.9">East-West Expy</text>
<text x="674" y="27.2">Central Florida</text>
<text x="674" y="38.5">Fairgrounds</text>
<text x="748" y="94.4" text-anchor="end">Emery</text>
<text x="748" y="105" text-anchor="end">Sports</text>
<text transform="translate(138,195) rotate(-13)">East-West Expy</text>
<text transform="translate(524,37) rotate(-10)">Deauville Dr</text>
<text transform="translate(175.7,86) rotate(-90)">Nowell St</text>
<text transform="translate(196.7,91) rotate(-90)">John St</text>
<text transform="translate(261.8,97.5) rotate(90)">Hastings St</text>
<text transform="translate(131.6,10) rotate(90)">Kirk St</text>
<text transform="translate(67.8,20) rotate(-90)">Observato</text>
<text transform="translate(436,12.5) rotate(60)">ara Rd</text>
<text transform="translate(531.8,165.8) rotate(90)">Walkup Dr</text>
<text transform="translate(90.9,241) rotate(90)" text-anchor="start">Powers Dr</text>
<text transform="translate(73.7,232) rotate(90)" text-anchor="start">Observatory</text>
<text transform="translate(40,242) rotate(90)" text-anchor="start">Hart Blvd</text>
</g>
<!-- pin -->
<path d="M391 95.5 C385 95.5 381 100 381 105.5 C381 112 388 119 391 128 C394 119 401 112 401 105.5 C401 100 397 95.5 391 95.5 Z" fill="#e8503a"/>
<circle cx="391" cy="105" r="3.3" fill="#2a2a2a"/>
<!-- mapbox logo -->
<circle cx="15.5" cy="251.6" r="8.4" fill="#f2f2f2" stroke="#2a2a2a" stroke-width="0.8"/>
<path d="M16 246.2 C19 246.2 21 248.3 21 251 C21 253.8 19 256 16 256 L11 256.6 L11.6 251.5 C11.6 248.5 13.2 246.2 16 246.2 Z" fill="#333"/>
<path d="M16.3 249 L16.9 250.6 L18.4 251.1 L16.9 251.7 L16.3 253.2 L15.7 251.7 L14.2 251.1 L15.7 250.6 Z" fill="#f2f2f2"/>
<text x="27" y="256.8" font-family="Liberation Sans" font-size="15.5" fill="#f0f0f0" stroke="#f0f0f0" stroke-width="0.5" letter-spacing="-0.2">mapbox</text>
<!-- attribution -->
<rect x="460" y="250" width="290" height="18" fill="#d0d0d0" opacity="0.7"/>
<text x="465" y="263" font-family="Liberation Sans" font-size="13" fill="#2a9df4">© Mapbox © OpenStreetMap <tspan font-weight="bold">Improve this map</tspan></text>
</svg>




<!-- Right panel -->
<div id="rptop" class="a"></div>
<div id="rp" class="a"></div>
<svg class="a" style="left:1961px;top:16px" width="25" height="25" viewBox="0 0 25 25"><path d="M2 2.2 H22.5 Q23.8 2.2 23.8 3.5 V15.5 Q23.8 16.8 22.5 16.8 H6 L1.2 22.5 V3.5 Q1.2 2.2 2.5 2.2 Z" stroke="#fff" stroke-width="1.8" fill="none" stroke-linejoin="round"/><rect x="5.5" y="5.5" width="14" height="1.9" fill="#fff"/><rect x="5.5" y="8.8" width="14" height="1.9" fill="#fff"/><rect x="5.5" y="12" width="9.5" height="1.9" fill="#fff"/></svg>
<div class="a" style="left:1935px;top:57px;width:3px;height:959px;background:linear-gradient(90deg,rgba(0,0,0,0),rgba(0,0,0,0.07))"></div>
<div class="av" style="top:69.5px;background:#dce775;color:#111">DU<i style="background:#3cb44b"></i></div>
<div class="av" style="top:116px;background:#ffe082;color:#111">DS<i style="background:#757575"></i></div>
<div class="av" style="top:162.5px;background:#a5d6a7;color:#111">TW<i style="background:#3cb44b"></i></div>
<div class="av" style="top:209px;background:#ffcc80;color:#111">DM<i style="background:#3cb44b"></i></div>
<div class="av" style="top:255.5px;background:#90a4ae;color:#111">TU<i style="background:#757575"></i></div>
<div class="av" style="top:316.5px;background:#3d5afe;color:#111">WN<i style="background:#3cb44b"></i></div>
<div class="av" style="top:363px;background:#ff7043;color:#111">OF<i style="background:#3cb44b"></i></div>
<div class="av" style="top:409.5px;background:#ccff90;color:#111">SH<i style="background:#3cb44b"></i></div>
<div class="av" style="top:456px;background:#e1f5fe;color:#111">TT<i style="background:#757575"></i></div>
<div class="av" style="top:502.5px;background:#ba68c8;color:#111">DT<i style="background:#757575"></i></div>
<div class="av" style="top:549px;background:#ff6d00;color:#fff">EM<i style="background:#757575"></i></div>
<div class="a" style="left:1957px;top:303px;width:24px;height:1.5px;background:#e0e0e0"></div>

</body></html>
